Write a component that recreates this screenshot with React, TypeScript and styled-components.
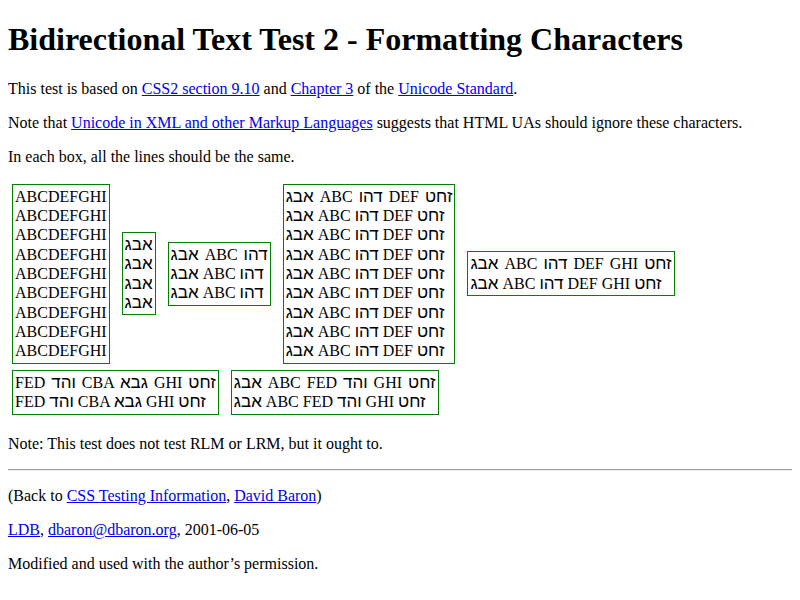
import React from 'react';
import styled, { createGlobalStyle } from 'styled-components';

const GlobalStyle = createGlobalStyle`
  html, body {
    margin: 0;
    padding: 0;
  }
  body {
    padding: 0 8px 8px;
    background: #fff;
    color: #000;
    font-family: "Liberation Serif", "Times New Roman", serif;
    font-size: 16px;
  }
`;

const Title = styled.h1`
  font-size: 32px;
  font-weight: bold;
  margin: 21.44px 0;
`;

const Para = styled.p`
  margin: 16px 0;
`;

const Link = styled.a`
  color: #0000ee;
  text-decoration: underline;
`;

const Sets = styled.div`
  margin: 16px 0;
`;

const Box = styled.div`
  display: inline-block;
  vertical-align: middle;
  margin: 2px 4px 4.5px;
  padding: 2px;
  border: 1px solid green;
  line-height: 19.3px;
  direction: ltr;
  unicode-bidi: bidi-override;
`;

const Line = styled.div<{ $ref?: boolean }>`
  white-space: nowrap;
  word-spacing: ${(p) => (p.$ref ? '2px' : '0')};
`;

const Heb = styled.span`
  font-family: "Liberation Sans", "DejaVu Sans", sans-serif;
  font-size: 17px;
`;

const Rule = styled.hr`
  margin: 8px 0;
  border: 0;
  border-top: 1px solid #9a9a9a;
  border-bottom: 1px solid #eee;
`;

// strings are written in visual (left to right) order
const render = (text: string) =>
  text.split(/([\u0590-\u05ff]+)/).map((part, i) =>
    /[\u0590-\u05ff]/.test(part) ? <Heb key={i}>{part}</Heb> : part
  );

const boxes: { text: string; lines: number; first?: boolean }[][] = [
  [
    { text: 'ABCDEFGHI', lines: 9 },
    { text: 'אבג', lines: 4 },
    { text: 'אבג ABC דהו', lines: 3, first: true },
    { text: 'אבג ABC דהו DEF זחט', lines: 9, first: true },
    { text: 'אבג ABC דהו DEF GHI זחט', lines: 2, first: true },
  ],
  [
    { text: 'FED והד CBA גבא GHI זחט', lines: 2, first: true },
    { text: 'אבג ABC FED והד GHI זחט', lines: 2, first: true },
  ],
];

export default function App() {
  return (
    <>
      <GlobalStyle />
      <Title>Bidirectional Text Test 2 - Formatting Characters</Title>
      <Para>
        This test is based on <Link href="#">CSS2 section 9.10</Link> and{' '}
        <Link href="#">Chapter 3</Link> of the <Link href="#">Unicode Standard</Link>.
      </Para>
      <Para>
        Note that <Link href="#">Unicode in XML and other Markup Languages</Link> suggests
        that HTML UAs should ignore these characters.
      </Para>
      <Para>In each box, all the lines should be the same.</Para>
      <Sets>
        {boxes.map((row, r) => (
          <React.Fragment key={r}>
            {row.map((b, i) => (
              <React.Fragment key={i}>
                <Box>
                  {Array.from({ length: b.lines }, (_, n) => (
                    <Line key={n} $ref={b.first && n === 0}>
                      {render(b.text)}
                    </Line>
                  ))}
                </Box>{' '}
              </React.Fragment>
            ))}
            {r === 0 && <br />}
          </React.Fragment>
        ))}
      </Sets>
      <Para>Note: This test does not test RLM or LRM, but it ought to.</Para>
      <Rule />
      <Para>
        (Back to <Link href="#">CSS Testing Information</Link>,{' '}
        <Link href="#">David Baron</Link>)
      </Para>
      <Para>
        <Link href="#">LDB</Link>, <Link href="#">dbaron@dbaron.org</Link>, 2001-06-05
      </Para>
      <Para>Modified and used with the author’s permission.</Para>
    </>
  );
}
